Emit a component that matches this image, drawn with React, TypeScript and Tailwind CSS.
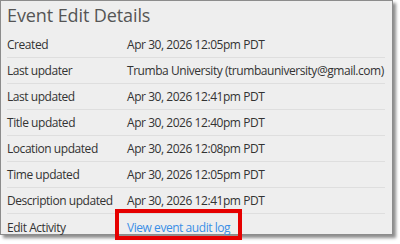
import React from 'react';

const rows: { label: string; value: string }[] = [
    { label: 'Created', value: 'Apr 30, 2026 12:05pm PDT' },
    { label: 'Last updater', value: 'Trumba University (trumbauniversity@gmail.com)' },
    { label: 'Last updated', value: 'Apr 30, 2026 12:41pm PDT' },
    { label: 'Title updated', value: 'Apr 30, 2026 12:40pm PDT' },
    { label: 'Location updated', value: 'Apr 30, 2026 12:08pm PDT' },
    { label: 'Time updated', value: 'Apr 30, 2026 12:05pm PDT' },
    { label: 'Description updated', value: 'Apr 30, 2026 12:41pm PDT' },
];

export default function App() {
    return (
        <div className="w-[400px] h-[244px] bg-white" style={{ fontFamily: '"Open Sans", "Liberation Sans", sans-serif' }}>
            <div className="w-[393px] h-[235px] border border-[#8c8c8c] bg-[#eeeeee] shadow-[3px_3px_3px_rgba(0,0,0,0.45)] pl-[6px] pr-[7px]">
                <h1 className="h-[31px] text-[18px] leading-[28px] tracking-[-0.1px] text-[#555555]">Event Edit Details</h1>
                <div className="flex flex-col">
                    {rows.map((row) => (
                        <div key={row.label} className="flex h-[26px] items-center border-b border-[#dedede] pt-[1px] text-[12px] tracking-[-0.45px] text-[#333333]">
                            <div className="w-[120px] shrink-0 whitespace-nowrap">{row.label}</div>
                            <div className="whitespace-nowrap">{row.value}</div>
                        </div>
                    ))}
                    <div className="flex h-[26px] items-center pt-[1px] text-[12px] tracking-[-0.45px] text-[#333333]">
                        <div className="w-[120px] shrink-0">Edit Activity</div>
                        <span className="relative text-[#3a8ee6] leading-[18px]">
                            View event audit log
                            <span className="absolute -left-[12px] -top-[10px] -right-[12px] -bottom-[3px] border-4 border-[#e60000]" />
                        </span>
                    </div>
                </div>
            </div>
        </div>
    );
}
